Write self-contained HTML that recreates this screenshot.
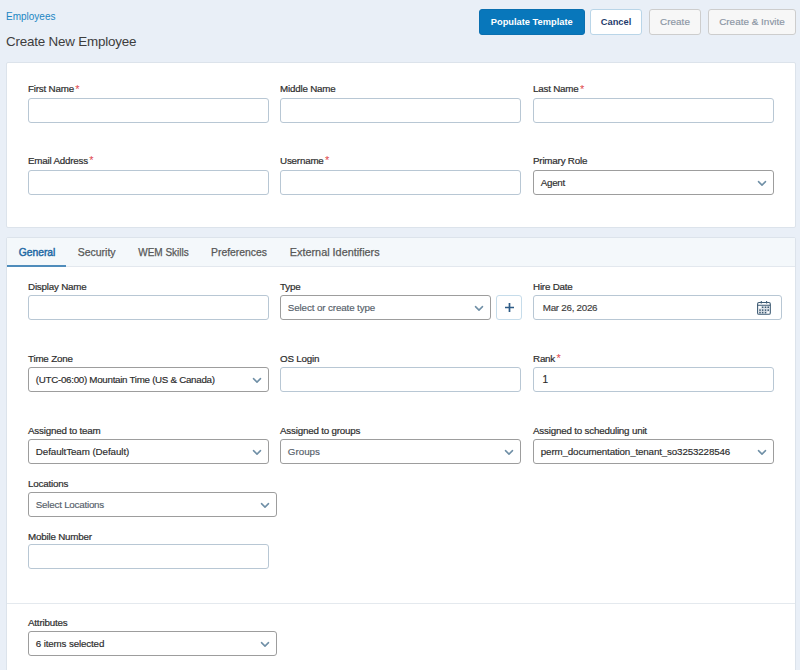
<!DOCTYPE html>
<html><head><meta charset="utf-8"><title>Create New Employee</title>
<style>
html,body{margin:0;padding:0;}
body{width:800px;height:670px;overflow:hidden;background:#e9eff7;position:relative;font-family:"Liberation Sans",sans-serif;}
div{box-sizing:border-box;}
.crumb,.title,.lbl,.tab{position:absolute;white-space:nowrap;}
.crumb{font-size:10px;line-height:10px;color:#1b86c3;}
.title{font-size:13.4px;line-height:13.4px;color:#3d3d3d;letter-spacing:-0.2px;}
.btn{position:absolute;border-radius:3px;font-size:9.3px;text-align:center;line-height:25px;white-space:nowrap;}
.primary{background:#0877bb;color:#fff;font-weight:bold;border:1px solid #0a6fb0;}
.cancel{background:#fff;border:1px solid #b9d5e8;color:#1f3c6c;font-weight:bold;font-size:9.3px;}
.dis{background:#f7f7f7;border:1px solid #cdcdcd;color:#8a95a3;-webkit-text-stroke:0.15px #8a95a3;font-size:9.95px;line-height:23.5px;}
.card{position:absolute;background:#fff;border:1px solid #dce3eb;border-radius:2px;}
.tabbar{position:absolute;background:#f4f8fb;border-bottom:1px solid #e3e8ee;}
.tabline{position:absolute;background:#4f8cbb;}
.tab{font-size:10.4px;line-height:10.4px;color:#585858;-webkit-text-stroke:0.25px #585858;}
.tab.act{color:#1f6aa5;-webkit-text-stroke:0.45px #1f6aa5;}
.lbl{font-size:9.8px;line-height:9.8px;color:#2e2e2e;letter-spacing:-0.2px;-webkit-text-stroke:0.2px #2e2e2e;}
.req{color:#e0474c;-webkit-text-stroke:0;margin-left:1.3px;font-size:11px;position:relative;top:0.6px;}
.inp,.sel,.plus{position:absolute;background:#fff;border:1px solid #b8c7d4;border-radius:3px;}
.sel{border-color:#9d9d9d;}
.plus{border-color:#c6dcea;}
.val{position:absolute;left:6.8px;-webkit-text-stroke:0.15px currentColor;font-size:9.8px;line-height:9.8px;color:#2a2a2a;white-space:nowrap;}
.val.muted{color:#55606a;}
.chw{position:absolute;right:6px;top:8.5px;width:10px;height:8px;}
.chw svg{display:block;}
.sep{position:absolute;background:#e4e9ee;}
</style></head><body>
<div class="crumb" style="left:6px;top:11.84px">Employees</div>
<div class="title" style="left:6px;top:35.46px">Create New Employee</div>
<div class="btn primary" style="left:478.5px;top:9px;width:106.5px;height:26px">Populate Template</div>
<div class="btn cancel" style="left:590px;top:9px;width:52px;height:26px">Cancel</div>
<div class="btn dis" style="left:649px;top:9px;width:52px;height:26px">Create</div>
<div class="btn dis" style="left:708px;top:9px;width:88px;height:26px">Create &amp; Invite</div>
<div class="card" style="left:6px;top:62px;width:790px;height:166px"></div>
<div class="lbl" style="left:28px;top:84.20px">First Name<span class="req">*</span></div>
<div class="lbl" style="left:280px;top:84.20px">Middle Name</div>
<div class="lbl" style="left:533px;top:84.20px">Last Name<span class="req">*</span></div>
<div class="inp" style="left:28px;top:98px;width:241px;height:25px"></div>
<div class="inp" style="left:280px;top:98px;width:241px;height:25px"></div>
<div class="inp" style="left:533px;top:98px;width:241px;height:25px"></div>
<div class="lbl" style="left:28px;top:155.90px">Email Address<span class="req">*</span></div>
<div class="lbl" style="left:280px;top:155.90px">Username<span class="req">*</span></div>
<div class="lbl" style="left:533px;top:155.90px">Primary Role</div>
<div class="inp" style="left:28px;top:170px;width:241px;height:25px"></div>
<div class="inp" style="left:280px;top:170px;width:241px;height:25px"></div>
<div class="sel" style="left:533px;top:170px;width:241px;height:25px"><span class="val" style="top:6.50px;letter-spacing:-0.3px">Agent</span><span class="chw"><svg width="10" height="8" viewBox="0 0 10 8"><path d="M1.5 1.6 L5 5.1 L8.5 1.6" fill="none" stroke="#6f8fa6" stroke-width="1.5" stroke-linecap="round" stroke-linejoin="round"/></svg></span></div>
<div class="card" style="left:6px;top:237px;width:790px;height:450px"></div>
<div class="tabbar" style="left:7px;top:238px;width:788px;height:29px"></div>
<div class="tabline" style="left:7px;top:265px;width:59px;height:2px"></div>
<div class="tab act" style="left:18.7px;top:247.88px;font-size:10.3px;line-height:10.3px">General</div>
<div class="tab" style="left:77.7px;top:247.36px;font-size:10.5px;line-height:10.5px">Security</div>
<div class="tab" style="left:138.2px;top:248.14px;font-size:10.0px;line-height:10.0px">WEM Skills</div>
<div class="tab" style="left:211px;top:247.80px;font-size:10.4px;line-height:10.4px">Preferences</div>
<div class="tab" style="left:289.8px;top:247.42px;font-size:10.85px;line-height:10.85px">External Identifiers</div>
<div class="lbl" style="left:28px;top:281.90px">Display Name</div>
<div class="lbl" style="left:280px;top:281.90px">Type</div>
<div class="lbl" style="left:533px;top:281.90px">Hire Date</div>
<div class="inp" style="left:28px;top:295px;width:241px;height:25px"></div>
<div class="sel" style="left:280px;top:295px;width:211px;height:25px"><span class="val muted" style="top:6.90px;letter-spacing:-0.12px">Select or create type</span><span class="chw"><svg width="10" height="8" viewBox="0 0 10 8"><path d="M1.5 1.6 L5 5.1 L8.5 1.6" fill="none" stroke="#6f8fa6" stroke-width="1.5" stroke-linecap="round" stroke-linejoin="round"/></svg></span></div>
<div class="plus" style="left:496px;top:295px;width:26px;height:25px"><svg width="24" height="23" viewBox="0 0 24 23" style="display:block"><path d="M8 11.5 H17 M12.5 7 V16" stroke="#2d5b86" stroke-width="1.7"/></svg></div>
<div class="inp" style="left:533px;top:295px;width:249px;height:25px"><span class="val" style="color:#404040;left:8.8px;top:6.70px;letter-spacing:-0.27px">Mar 26, 2026</span></div>
<svg width="20" height="20" viewBox="0 0 20 20" style="position:absolute;left:754px;top:298px"><g fill="none" stroke="#3d5a73" stroke-width="1.1"><rect x="3.6" y="4.5" width="12.7" height="11.8" rx="1.4"/><path d="M3.6 7.3 H16.3 M7.3 2.9 V5.6 M12.6 2.9 V5.6"/></g><g stroke="#c9d3dc" stroke-width="0.5" fill="none"><path d="M4.2 10.7 H15.7 M4.2 13.4 H15.7 M7.3 8 V15.8 M10.1 8 V15.8 M12.85 8 V15.8"/></g><g fill="#3d5a73"><rect x="7.86" y="8.45" width="1.6" height="1.6"/><rect x="10.70" y="8.45" width="1.6" height="1.6"/><rect x="13.40" y="8.45" width="1.6" height="1.6"/><rect x="5.20" y="11.30" width="1.6" height="1.6"/><rect x="7.86" y="11.30" width="1.6" height="1.6"/><rect x="10.70" y="11.30" width="1.6" height="1.6"/><rect x="13.40" y="11.30" width="1.6" height="1.6"/><rect x="5.20" y="13.80" width="1.6" height="1.6"/><rect x="7.86" y="13.80" width="1.6" height="1.6"/><rect x="10.70" y="13.80" width="1.6" height="1.6"/></g></svg>
<div class="lbl" style="left:28px;top:353.70px">Time Zone</div>
<div class="lbl" style="left:280px;top:353.70px">OS Login</div>
<div class="lbl" style="left:533px;top:353.70px">Rank<span class="req">*</span></div>
<div class="sel" style="left:28px;top:367px;width:241px;height:25px"><span class="val" style="top:6.50px;letter-spacing:-0.3px">(UTC-06:00) Mountain Time (US &amp; Canada)</span><span class="chw"><svg width="10" height="8" viewBox="0 0 10 8"><path d="M1.5 1.6 L5 5.1 L8.5 1.6" fill="none" stroke="#6f8fa6" stroke-width="1.5" stroke-linecap="round" stroke-linejoin="round"/></svg></span></div>
<div class="inp" style="left:280px;top:367px;width:241px;height:25px"></div>
<div class="inp" style="left:533px;top:367px;width:241px;height:25px"><span class="val" style="left:8.5px;top:7.44px;font-size:10px;line-height:10px">1</span></div>
<div class="lbl" style="left:28px;top:425.60px">Assigned to team</div>
<div class="lbl" style="left:280px;top:425.60px">Assigned to groups</div>
<div class="lbl" style="left:533px;top:425.60px">Assigned to scheduling unit</div>
<div class="sel" style="left:28px;top:439px;width:241px;height:25px"><span class="val" style="top:6.50px;letter-spacing:-0.09px">DefaultTeam (Default)</span><span class="chw"><svg width="10" height="8" viewBox="0 0 10 8"><path d="M1.5 1.6 L5 5.1 L8.5 1.6" fill="none" stroke="#6f8fa6" stroke-width="1.5" stroke-linecap="round" stroke-linejoin="round"/></svg></span></div>
<div class="sel" style="left:280px;top:439px;width:241px;height:25px"><span class="val muted" style="top:6.50px;letter-spacing:0px">Groups</span><span class="chw"><svg width="10" height="8" viewBox="0 0 10 8"><path d="M1.5 1.6 L5 5.1 L8.5 1.6" fill="none" stroke="#6f8fa6" stroke-width="1.5" stroke-linecap="round" stroke-linejoin="round"/></svg></span></div>
<div class="sel" style="left:533px;top:439px;width:241px;height:25px"><span class="val" style="top:6.50px;letter-spacing:-0.15px">perm_documentation_tenant_so3253228546</span><span class="chw"><svg width="10" height="8" viewBox="0 0 10 8"><path d="M1.5 1.6 L5 5.1 L8.5 1.6" fill="none" stroke="#6f8fa6" stroke-width="1.5" stroke-linecap="round" stroke-linejoin="round"/></svg></span></div>
<div class="lbl" style="left:28px;top:478.50px">Locations</div>
<div class="sel" style="left:28px;top:492px;width:249px;height:25px"><span class="val muted" style="top:6.50px;letter-spacing:-0.23px">Select Locations</span><span class="chw"><svg width="10" height="8" viewBox="0 0 10 8"><path d="M1.5 1.6 L5 5.1 L8.5 1.6" fill="none" stroke="#6f8fa6" stroke-width="1.5" stroke-linecap="round" stroke-linejoin="round"/></svg></span></div>
<div class="lbl" style="left:28px;top:531.50px">Mobile Number</div>
<div class="inp" style="left:28px;top:544px;width:241px;height:25px"></div>
<div class="sep" style="left:7px;top:603px;width:788px;height:1px"></div>
<div class="lbl" style="left:28px;top:618.00px">Attributes</div>
<div class="sel" style="left:28px;top:631px;width:249px;height:25px"><span class="val" style="top:6.90px;letter-spacing:-0.15px">6 items selected</span><span class="chw"><svg width="10" height="8" viewBox="0 0 10 8"><path d="M1.5 1.6 L5 5.1 L8.5 1.6" fill="none" stroke="#6f8fa6" stroke-width="1.5" stroke-linecap="round" stroke-linejoin="round"/></svg></span></div>

</body></html>
